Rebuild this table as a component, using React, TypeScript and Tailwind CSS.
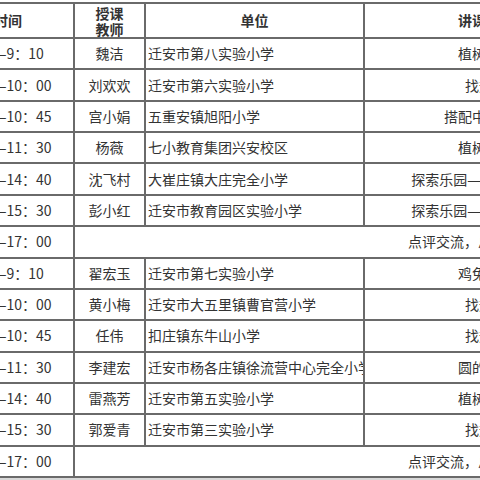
import React from "react";

type Row =
  | { time: string; teacher: string; unit: string; lesson: string }
  | { time: string; merged: string };

const rows: Row[] = [
  { time: "—9：10", teacher: "魏洁", unit: "迁安市第八实验小学", lesson: "植树问题" },
  { time: "—10：00", teacher: "刘欢欢", unit: "迁安市第六实验小学", lesson: "找规律" },
  { time: "—10：45", teacher: "宫小娟", unit: "五重安镇旭阳小学", lesson: "搭配中的学问" },
  { time: "—11：30", teacher: "杨薇", unit: "七小教育集团兴安校区", lesson: "植树问题" },
  { time: "—14：40", teacher: "沈飞村", unit: "大崔庄镇大庄完全小学", lesson: "探索乐园——有趣的推理" },
  { time: "—15：30", teacher: "彭小红", unit: "迁安市教育园区实验小学", lesson: "探索乐园——有趣的推理" },
  { time: "—17：00", merged: "点评交流，总结提升" },
  { time: "—9：10", teacher: "翟宏玉", unit: "迁安市第七实验小学", lesson: "鸡兔同笼" },
  { time: "—10：00", teacher: "黄小梅", unit: "迁安市大五里镇曹官营小学", lesson: "找规律" },
  { time: "—10：45", teacher: "任伟", unit: "扣庄镇东牛山小学", lesson: "找规律" },
  { time: "—11：30", teacher: "李建宏", unit: "迁安市杨各庄镇徐流营中心完全小学", lesson: "圆的认识" },
  { time: "—14：40", teacher: "雷燕芳", unit: "迁安市第五实验小学", lesson: "植树问题" },
  { time: "—15：30", teacher: "郭爱青", unit: "迁安市第三实验小学", lesson: "找规律" },
  { time: "—17：00", merged: "点评交流，总结提升" },
];

const cell = "bg-white flex items-center overflow-hidden whitespace-nowrap";

export default function App() {
  return (
    <div className="w-[480px] h-[480px] overflow-hidden bg-[#d8d8d8] text-[14px] text-[#333] font-['Noto_Sans_CJK_SC','Noto_Sans',sans-serif]">
      <div className="pt-[2px] bg-white">
        <div className="grid w-max grid-cols-[73px_69px_217px_242px_300px] grid-rows-[33px_repeat(14,29.36px)] gap-[2px] bg-[#6a6a6a] py-[2px] pr-[2px]">
          <div className={`${cell} font-bold`}>
            <span className="ml-[-6px]">时间</span>
          </div>
          <div className={`${cell} justify-center font-bold`}>
            <div className="text-center leading-[16px]">
              授课
              <br />
              教师
            </div>
          </div>
          <div className={`${cell} justify-center font-bold`}>单位</div>
          <div className={`${cell} justify-center font-bold`}>讲课内容</div>
          <div className={`${cell} justify-center font-bold`}>评课教师</div>

          {rows.map((r, i) => (
            <React.Fragment key={i}>
              <div className={cell}>
                <span className="ml-[-6px]">{r.time}</span>
              </div>
              {"merged" in r ? (
                <div className={`${cell} col-span-4 pl-[333px]`}>{r.merged}</div>
              ) : (
                <>
                  <div className={`${cell} justify-center`}>{r.teacher}</div>
                  <div className={`${cell} pl-[2px]`}>{r.unit}</div>
                  <div className={`${cell} justify-center`}>{r.lesson}</div>
                  <div className={`${cell} justify-center`}></div>
                </>
              )}
            </React.Fragment>
          ))}
        </div>
      </div>
    </div>
  );
}
